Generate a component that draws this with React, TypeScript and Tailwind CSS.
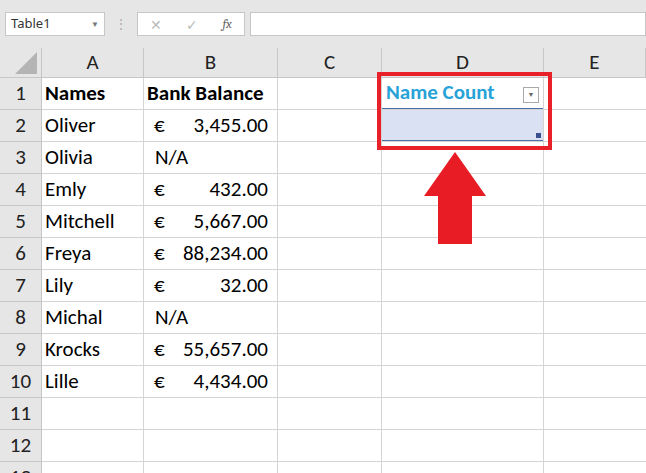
export default function App() {
  const cols = ["A", "B", "C", "D", "E"];
  const widths = [102, 134, 104, 162, 102];
  const rows: [string, string, string][] = [
    ["Names", "", "Bank Balance"],
    ["Oliver", "€", "3,455.00"],
    ["Olivia", "N/A", ""],
    ["Emly", "€", "432.00"],
    ["Mitchell", "€", "5,667.00"],
    ["Freya", "€", "88,234.00"],
    ["Lily", "€", "32.00"],
    ["Michal", "N/A", ""],
    ["Krocks", "€", "55,657.00"],
    ["Lille", "€", "4,434.00"],
    ["", "", ""],
    ["", "", ""],
    ["", "", ""],
  ];
  const font = { fontFamily: "Calibri, Carlito, 'Liberation Sans', sans-serif" };
  return (
    <div className="relative w-[646px] h-[473px] overflow-hidden bg-white" style={font}>
      <div className="h-[48px] bg-[#e6e6e6] flex items-center gap-0 pl-[5px]" style={{ fontFamily: "'Segoe UI', 'Noto Sans', sans-serif" }}>
        <div className="w-[100px] h-[24px] bg-white border border-[#c6c6c6] flex items-center justify-between px-[5px] text-[13px] text-[#333]">
          <span>Table1</span>
          <span className="text-[8px] text-[#777]">▼</span>
        </div>
        <div className="w-[32px] text-center text-[#aaa] text-[12px] leading-none">⋮</div>
        <div className="w-[108px] h-[24px] bg-white border border-[#c6c6c6] flex items-center justify-around text-[#bbb] text-[14px]">
          <span>✕</span><span>✓</span><span className="italic text-[#666] font-serif text-[13px]">fx</span>
        </div>
        <div className="ml-[5px] flex-1 h-[24px] bg-white border border-[#c6c6c6]" />
      </div>
      <div className="flex h-[30px] bg-[#e6e6e6] border-b border-[#c6c6c6]">
        <div className="w-[42px] relative border-r border-[#c6c6c6]">
          <div className="absolute right-[4px] bottom-[3px] w-0 h-0 border-l-[22px] border-l-transparent border-b-[22px] border-b-[#b4b4b4]" />
        </div>
        {cols.map((c, i) => (
          <div key={c} style={{ width: widths[i] }} className="flex items-center justify-center text-[21px] text-[#222] border-r border-[#c6c6c6]">{c}</div>
        ))}
      </div>
      {rows.map((r, i) => (
        <div key={i} className="flex h-[32px]">
          <div className="w-[42px] bg-[#e6e6e6] border-r border-b border-[#c6c6c6] flex items-center justify-center text-[21px] text-[#222]">{i + 1}</div>
          <div className={`w-[102px] border-r border-b border-[#d4d4d4] flex items-center pl-[3px] text-[21px] text-black ${i === 0 ? "font-bold" : ""}`}>{r[0]}</div>
          <div className={`w-[134px] border-r border-b border-[#d4d4d4] flex items-center px-[3px] text-[21px] text-black ${i === 0 ? "font-bold" : ""}`}>
            {i === 0 ? <span>{r[2]}</span> : r[1] === "N/A" ? <span className="pl-[8px]">N/A</span> : r[1] ? (<><span className="pl-[7px]">€</span><span className="ml-auto pr-[6px]">{r[2]}</span></>) : null}
          </div>
          <div className="w-[104px] border-r border-b border-[#d4d4d4]" />
          <div className="w-[162px] border-r border-b border-[#d4d4d4] relative">
            {i === 0 && (
              <div className="absolute inset-0 flex items-center pl-[4px] text-[21px] font-bold text-[#27a3d8] border-b border-[#4f6fa8]">
                Name Count
                <div className="absolute right-[4px] top-[9px] w-[16px] h-[16px] bg-white border border-[#aaa] flex items-center justify-center text-[7px] text-[#666]">▼</div>
              </div>
            )}
            {i === 1 && (
              <div className="absolute inset-0 bg-[#d9e1f2] border-b border-[#4f6fa8]">
                <div className="absolute right-[2px] bottom-[2px] w-[5px] h-[5px] bg-[#3b4f8e]" />
              </div>
            )}
          </div>
          <div className="w-[102px] border-b border-[#d4d4d4]" />
        </div>
      ))}
      <div className="absolute left-[377px] top-[72px] w-[175px] h-[78px] border-[4px] border-[#e8202a]" />
      <svg className="absolute left-[420px] top-[150px]" width="70" height="96" viewBox="0 0 70 96">
        <polygon points="35,2 66,46 52,46 52,94 18,94 18,46 4,46" fill="#e81c25" />
      </svg>
    </div>
  );
}
